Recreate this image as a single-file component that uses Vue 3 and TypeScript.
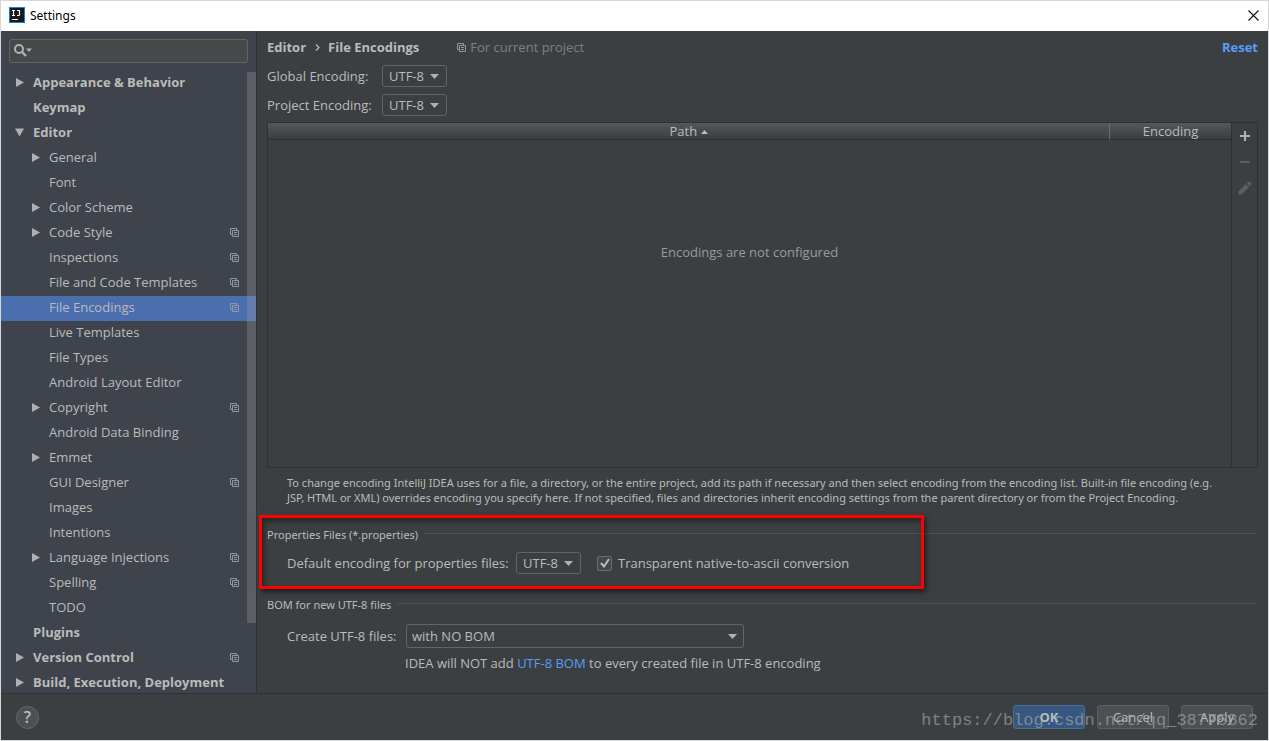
<script setup lang="ts">
import { ref } from 'vue'

interface TreeNode {
  label: string
  level: 0 | 1
  state?: 'open' | 'closed'
  project?: boolean
}

const nodes: TreeNode[] = [
  { label: 'Appearance & Behavior', level: 0, state: 'closed' },
  { label: 'Keymap', level: 0 },
  { label: 'Editor', level: 0, state: 'open' },
  { label: 'General', level: 1, state: 'closed' },
  { label: 'Font', level: 1 },
  { label: 'Color Scheme', level: 1, state: 'closed' },
  { label: 'Code Style', level: 1, state: 'closed', project: true },
  { label: 'Inspections', level: 1, project: true },
  { label: 'File and Code Templates', level: 1, project: true },
  { label: 'File Encodings', level: 1, project: true },
  { label: 'Live Templates', level: 1 },
  { label: 'File Types', level: 1 },
  { label: 'Android Layout Editor', level: 1 },
  { label: 'Copyright', level: 1, state: 'closed', project: true },
  { label: 'Android Data Binding', level: 1 },
  { label: 'Emmet', level: 1, state: 'closed' },
  { label: 'GUI Designer', level: 1, project: true },
  { label: 'Images', level: 1 },
  { label: 'Intentions', level: 1 },
  { label: 'Language Injections', level: 1, state: 'closed', project: true },
  { label: 'Spelling', level: 1, project: true },
  { label: 'TODO', level: 1 },
  { label: 'Plugins', level: 0 },
  { label: 'Version Control', level: 0, state: 'closed', project: true },
  { label: 'Build, Execution, Deployment', level: 0, state: 'closed' },
]

const selected = ref('File Encodings')
const query = ref('')
const transparent = ref(true)
</script>

<template>
  <div class="window">
    <header class="titlebar">
      <svg class="logo" width="16" height="16" viewBox="0 0 16 16" aria-hidden="true">
        <rect width="16" height="16" fill="#1a7de0" />
        <rect x="1" y="1" width="14" height="14" fill="#17191c" />
        <path d="M3 3.500h3M4.500 3.500v5M3 8.500h3M8 3.500h3M10.500 3.500v4.200q0 .8-.8.8H8" fill="none" stroke="#fff" stroke-width="1.200" />
        <path d="M3 12.500h6" stroke="#fff" />
      </svg>
      <span class="title">Settings</span>
      <button class="close" aria-label="Close">
        <svg width="11" height="11" viewBox="0 0 11 11"><path d="M.5.5l10 10M10.500.5l-10 10" stroke="#111" stroke-width="1.100" /></svg>
      </button>
    </header>

    <div class="body">
      <nav class="sidebar">
        <div class="search">
          <svg width="20" height="14" viewBox="0 0 20 14" aria-hidden="true">
            <circle cx="5" cy="5" r="4" fill="none" stroke="#afb1b3" stroke-width="2" />
            <path d="M8 8l4 4" stroke="#afb1b3" stroke-width="2.400" />
            <path d="M12 4.500h6l-3 3.500z" fill="#afb1b3" />
          </svg>
          <input v-model="query" type="text" aria-label="Search settings" />
        </div>
        <div class="tree-area">
          <ul class="tree">
            <li v-for="n in nodes" :key="n.label">
              <button class="node" :class="['level-' + n.level, { selected: n.label === selected }]" @click="selected = n.label">
                <span class="arrow">
                  <svg v-if="n.state === 'closed'" width="9" height="9" viewBox="0 0 9 9"><path d="M1 0l8 4.500l-8 4.500z" fill="#b0b0b0" /></svg>
                  <svg v-else-if="n.state === 'open'" width="9" height="9" viewBox="0 0 9 9"><path d="M0 .5h9l-4.500 8z" fill="#b0b0b0" /></svg>
                </span>
                <span class="node-label">{{ n.label }}</span>
                <svg v-if="n.project" class="project" width="9" height="9" viewBox="0 0 9 9">
                  <path d="M6.500 2V.5h-6v6H2M2.500 2.500h6v6h-6zM4 4.500h3M4 6.500h3" />
                </svg>
              </button>
            </li>
          </ul>
          <div class="thumb"></div>
        </div>
      </nav>

      <main class="content">
        <div class="crumbs">
          <h1>Editor</h1>
          <svg width="5" height="7" viewBox="0 0 5 7" aria-hidden="true"><path d="M1 .5l3 3l-3 3" fill="none" stroke="#bbb" stroke-width="1.200" /></svg>
          <h1>File Encodings</h1>
          <span class="scope">
            <svg class="project" width="9" height="9" viewBox="0 0 9 9">
              <path d="M6.500 2V.5h-6v6H2M2.500 2.500h6v6h-6zM4 4.500h3M4 6.500h3" />
            </svg>
            For current project
          </span>
          <a class="reset" href="#">Reset</a>
        </div>

        <div class="field">
          <label for="global">Global Encoding:</label>
          <span class="combo">
            <select id="global"><option>UTF-8</option></select>
            <svg width="9" height="5" viewBox="0 0 9 5"><path d="M0 0h9l-4.500 5z" /></svg>
          </span>
        </div>
        <div class="field">
          <label for="project">Project Encoding:</label>
          <span class="combo">
            <select id="project"><option>UTF-8</option></select>
            <svg width="9" height="5" viewBox="0 0 9 5"><path d="M0 0h9l-4.500 5z" /></svg>
          </span>
        </div>

        <div class="panel">
          <table>
            <thead>
              <tr>
                <th class="path">Path <svg width="7" height="4" viewBox="0 0 7 4"><path d="M0 4h7l-3.500-4z" fill="#bbb" /></svg></th>
                <th class="encoding">Encoding</th>
              </tr>
            </thead>
            <tbody>
              <tr><td colspan="2">Encodings are not configured</td></tr>
            </tbody>
          </table>
          <div class="tools">
            <button aria-label="Add"><svg width="14" height="14" viewBox="0 0 14 14"><path d="M2 7h10M7 2v10" stroke="#afb1b3" stroke-width="2" /></svg></button>
            <button aria-label="Remove" disabled><svg width="14" height="14" viewBox="0 0 14 14"><path d="M2 7h10" stroke="#5c5e60" stroke-width="2" /></svg></button>
            <button aria-label="Edit" disabled><svg width="14" height="14" viewBox="0 0 14 14"><path d="M0.500 13.500v-3.200l7.500-7.300l3 3l-7.500 7.500zM8.800 2.200l1.300-1.300q1-.8 2 0l1 1q.8 1 0 2l-1.300 1.300z" fill="#5c5e60" /></svg></button>
          </div>
        </div>

        <p class="hint">To change encoding IntelliJ IDEA uses for a file, a directory, or the entire project, add its path if necessary and then select encoding from the encoding list. Built-in file encoding (e.g. JSP, HTML or XML) overrides encoding you specify here. If not specified, files and directories inherit encoding settings from the parent directory or from the Project Encoding.</p>

        <section class="properties">
          <h2>Properties Files (*.properties)</h2>
          <div class="row">
            <label class="wide" for="props">Default encoding for properties files:</label>
            <span class="combo">
              <select id="props"><option>UTF-8</option></select>
              <svg width="9" height="5" viewBox="0 0 9 5"><path d="M0 0h9l-4.500 5z" /></svg>
            </span>
            <label class="check">
              <span class="box">
                <input v-model="transparent" type="checkbox" />
                <svg v-if="transparent" width="10" height="10" viewBox="0 0 10 10"><path d="M1 5l3 3.500L9 1" fill="none" stroke="#bbb" stroke-width="2" /></svg>
              </span>
              Transparent native-to-ascii conversion
            </label>
          </div>
          <div class="highlight"></div>
        </section>

        <section class="bom">
          <h2>BOM for new UTF-8 files</h2>
          <div class="row">
            <label class="create" for="bom">Create UTF-8 files:</label>
            <span class="combo long">
              <select id="bom"><option>with NO BOM</option></select>
              <svg width="9" height="5" viewBox="0 0 9 5"><path d="M0 0h9l-4.500 5z" /></svg>
            </span>
          </div>
          <p class="note">IDEA will NOT add <a href="#">UTF-8 BOM</a> to every created file in UTF-8 encoding</p>
        </section>
      </main>
    </div>

    <footer class="footer">
      <button class="help" aria-label="Help">?</button>
      <div class="actions">
        <button class="primary">OK</button>
        <button>Cancel</button>
        <button>Apply</button>
      </div>
      <span class="watermark">https://blog.csdn.net/qq_38775862</span>
    </footer>
  </div>
</template>

<style>
body {
  margin: 0;
  background: #3c3f41;
}
</style>

<style scoped>
* {
  box-sizing: border-box;
}
.window {
  display: flex;
  flex-direction: column;
  height: 100vh;
  overflow: hidden;
  border: 1px solid #d5d7d8;
  background: #3c3f41;
  color: #bbbbbb;
  font: 13px/18px "Open Sans", "Noto Sans", sans-serif;
}
button,
select,
input {
  margin: 0;
  padding: 0;
  border: 0;
  background: none;
  color: inherit;
  font: inherit;
}
svg {
  display: block;
  flex: none;
}
a {
  color: #589df6;
  text-decoration: none;
}
h1,
h2,
p,
ul {
  margin: 0;
  padding: 0;
}
.titlebar {
  display: flex;
  align-items: center;
  flex: none;
  height: 30px;
  padding: 0 9px 2px 8px;
  background: #fff;
  color: #000;
}
.title {
  flex: 1;
  margin-left: 5px;
  padding-top: 2px;
  font: 12px/18px "Noto Sans", sans-serif;
}
.body {
  display: flex;
  flex: 1;
  min-height: 0;
}
.sidebar {
  display: flex;
  flex-direction: column;
  flex: none;
  width: 256px;
  border-right: 1px solid #313335;
  background: #3f434c;
}
.search {
  display: flex;
  align-items: center;
  flex: none;
  height: 24px;
  margin: 8px;
  padding: 0 4px;
  border: 1px solid #646464;
  border-radius: 3px;
  background: #45494a;
}
.search input {
  flex: 1;
  min-width: 0;
  outline: 0;
}
.tree-area {
  position: relative;
  flex: 1;
  min-height: 0;
  overflow: hidden;
}
.tree {
  list-style: none;
}
.node {
  display: flex;
  align-items: center;
  width: 100%;
  height: 25px;
  padding: 0 17px 2px 14px;
  text-align: left;
  white-space: nowrap;
}
.level-0 {
  font-weight: 700;
}
.level-1 {
  padding-left: 30px;
}
.arrow {
  flex: none;
  width: 18px;
}
.node-label {
  flex: 1;
  padding-bottom: 1px;
}
.selected {
  background: #4b6eaf;
}
.project path {
  fill: none;
  stroke: #8d98a3;
}
.thumb {
  position: absolute;
  top: 1px;
  right: 0;
  bottom: 70px;
  width: 9px;
  background: rgba(166, 166, 166, 0.28);
}
.content {
  flex: 1;
  min-width: 0;
  padding: 7px 10px 0;
}
.crumbs {
  display: flex;
  align-items: center;
  height: 18px;
  margin-bottom: 9px;
}
.crumbs > svg {
  margin: 0 8px 0 9px;
}
h1 {
  font-size: 13px;
  font-weight: 700;
}
.scope {
  display: flex;
  align-items: center;
  gap: 4px;
  margin-left: 38px;
  color: #808080;
}
.reset {
  margin-left: auto;
  font-weight: 700;
}
.field,
.row {
  display: flex;
  align-items: center;
}
.field {
  height: 22px;
  margin-bottom: 7px;
}
.field label {
  width: 115px;
}
.combo {
  position: relative;
  display: block;
  width: 65px;
}
.combo select {
  display: block;
  width: 100%;
  height: 22px;
  padding-left: 6px;
  border: 1px solid #646464;
  border-radius: 3px;
  appearance: none;
}
.combo option {
  background: #3c3f41;
}
.combo svg {
  position: absolute;
  top: 9px;
  right: 8px;
  fill: #afb1b3;
  pointer-events: none;
}
.combo.long {
  width: 338px;
}
.combo.long select {
  height: 24px;
  padding-left: 5px;
}
.combo.long svg {
  top: 10px;
  right: 7px;
}
.panel {
  display: flex;
  margin-top: -1px;
  border: 1px solid #2f3133;
}
table {
  flex: 1;
  border-collapse: separate;
  border-spacing: 0;
  table-layout: fixed;
}
th {
  height: 17px;
  padding: 0;
  border-bottom: 1px solid #2b2d2e;
  background: linear-gradient(#53585a, #3b3e40);
  font-weight: 400;
  line-height: 16px;
}
th svg {
  display: inline-block;
  vertical-align: 2px;
}
.encoding {
  width: 122px;
  border-left: 1px solid #6a6d6f;
}
td {
  height: 327px;
  padding: 103px 0 0;
  color: #999b9c;
  text-align: center;
  vertical-align: top;
}
.tools {
  display: flex;
  flex-direction: column;
  align-items: center;
  gap: 12px;
  width: 26px;
  padding-top: 6px;
  border-left: 1px solid #2f3133;
}
.hint {
  margin: 7px 32px 0 20px;
  font: 11px/15px "Noto Sans", sans-serif;
}
section {
  position: relative;
}
h2 {
  display: flex;
  align-items: center;
  gap: 6px;
  font: 11px/16px "Noto Sans", sans-serif;
}
h2::after {
  content: "";
  flex: 1;
  height: 1px;
  margin: 0 2px 3px 0;
  background: #505354;
}
.properties {
  margin-top: 22px;
}
.row {
  margin-left: 20px;
}
.properties .row {
  margin-top: 9px;
}
.wide {
  width: 229px;
}
.check {
  display: flex;
  align-items: center;
  gap: 6px;
  margin-left: 16px;
}
.box {
  position: relative;
  width: 15px;
  height: 15px;
}
.box input {
  display: block;
  width: 15px;
  height: 15px;
  border: 1px solid #6b6b6b;
  border-radius: 2px;
  background: #43494a;
  appearance: none;
}
.box svg {
  position: absolute;
  top: 2px;
  left: 3px;
  pointer-events: none;
}
.highlight {
  position: absolute;
  top: -12px;
  left: -8px;
  width: 665px;
  height: 74px;
  border: 3px solid #ff0000;
  box-shadow: 2px 3px 5px rgba(0, 0, 0, 0.55), inset 2px 3px 5px rgba(0, 0, 0, 0.45);
  pointer-events: none;
}
.bom {
  margin-top: 23px;
}
.bom .row {
  margin-top: 11px;
}
.create {
  width: 119px;
}
.note {
  margin: 6px 0 0 138px;
}
.footer {
  position: relative;
  display: flex;
  align-items: center;
  justify-content: space-between;
  flex: none;
  height: 47px;
  padding: 0 15px;
  border-top: 1px solid #2f3133;
}
.help {
  width: 23px;
  height: 23px;
  border: 1px solid #656869;
  border-radius: 50%;
  background: #4c5052;
  font-size: 16px;
  font-weight: 600;
}
.actions {
  display: flex;
  gap: 12px;
}
.actions button {
  width: 72px;
  height: 24px;
  border: 1px solid #5e6060;
  border-radius: 3px;
  background: #4c5052;
}
.actions .primary {
  border-color: #4c708c;
  background: #365880;
  font-weight: 700;
}
.watermark {
  position: absolute;
  top: 15px;
  right: 10px;
  color: rgba(175, 175, 170, 0.6);
  font: 17px/24px "Liberation Mono", monospace;
  pointer-events: none;
}
</style>
